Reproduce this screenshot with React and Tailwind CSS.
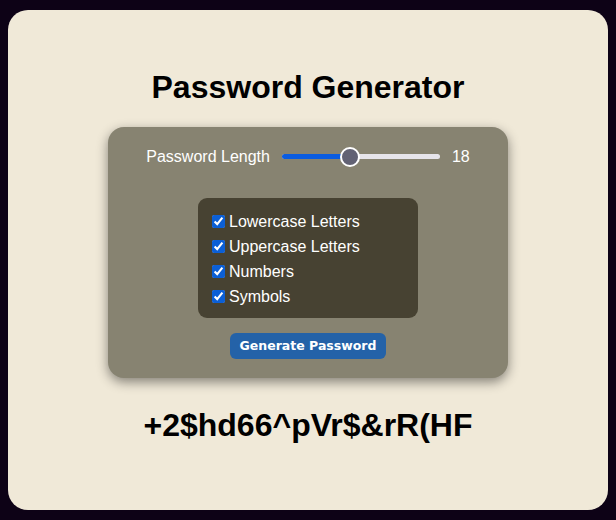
import React from "react";

function Check({ label }) {
  return (
    <label className="flex items-center gap-[4px] h-[25px]">
      <input type="checkbox" checked readOnly className="w-[13px] h-[13px] m-0 accent-[#0b5fd6]" />
      <span className="text-[16px] text-white leading-none">{label}</span>
    </label>
  );
}

export default function App() {
  return (
    <div className="w-[616px] h-[520px] bg-[#0d0216] pt-[10px] px-[8px] pb-[10px]" style={{ fontFamily: '"Liberation Sans", Arial, sans-serif' }}>
      <div className="h-[500px] bg-[#f0e9d8] rounded-[20px] flex flex-col items-center pt-[61px]">
        <h1 className="text-[32px] font-bold text-black leading-none h-[32px]">Password Generator</h1>
        <div className="mt-[24px] w-[400px] h-[251px] bg-[#878371] rounded-[16px] shadow-[0_4px_12px_rgba(0,0,0,0.45)] flex flex-col items-center pt-[20px]">
          <div className="flex items-center h-[20px]">
            <span className="text-[16px] text-white leading-none">Password Length</span>
            <div className="relative w-[158px] h-[20px] ml-[12px]">
              <div className="absolute left-0 right-0 top-[7px] h-[5px] rounded-full bg-[#e6e4ea]" />
              <div className="absolute left-0 w-[68px] top-[7px] h-[5px] rounded-l-full bg-[#0a5ce0]" />
              <div className="absolute left-[58px] top-0 w-[20px] h-[20px] rounded-full bg-[#626274] border-2 border-white" />
            </div>
            <span className="text-[16px] text-white leading-none ml-[12px]">18</span>
          </div>
          <div className="mt-[31px] w-[220px] h-[120px] bg-[#474232] rounded-[9px] pl-[14px] pt-[11px] flex flex-col">
            <Check label="Lowercase Letters" />
            <Check label="Uppercase Letters" />
            <Check label="Numbers" />
            <Check label="Symbols" />
          </div>
          <button className="mt-[15px] w-[156px] h-[26px] bg-[#2462a8] rounded-[6px] text-white font-bold leading-none" style={{ fontFamily: '"DejaVu Sans", Verdana, sans-serif', fontSize: "12.5px" }}>
            Generate Password
          </button>
        </div>
        <div className="mt-[31px] text-[32px] font-bold text-black leading-none">+2$hd66^pVr$&amp;rR(HF</div>
      </div>
    </div>
  );
}
